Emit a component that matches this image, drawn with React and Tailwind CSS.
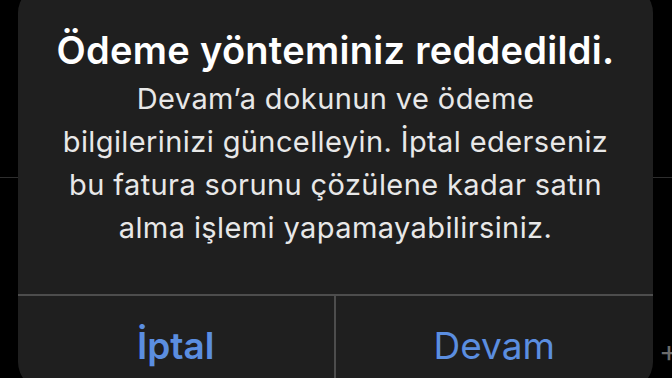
export default function App() {
  return (
    <div className="relative w-[672px] h-[378px] overflow-hidden bg-black font-['Inter','Liberation_Sans',sans-serif]">
      {/* content behind the alert */}
      <div className="pt-[177px]">
        <div className="h-px bg-[#2e2e2e]" />
      </div>
      <span className="absolute left-[659px] top-[336px] text-[30px] leading-none text-[#6b6b6b]">+</span>

      {/* alert */}
      <div className="absolute left-[18px] top-[-15px] w-[635px] h-[405px] rounded-[28px] bg-[#1f1f1f] flex flex-col">
        <div className="flex flex-col items-center px-4 pt-[42px] text-center">
          <h1 className="text-[38px] leading-[46px] font-semibold text-white tracking-[0.3px]">
            Ödeme yönteminiz reddedildi.
          </h1>
          <p className="mt-[4px] text-[29px] leading-[43px] text-[#e8e8e8] tracking-[0.4px]">
            Devam’a dokunun ve ödeme
            <br />
            bilgilerinizi güncelleyin. İptal ederseniz
            <br />
            bu fatura sorunu çözülene kadar satın
            <br />
            alma işlemi yapamayabilirsiniz.
          </p>
        </div>
        <div className="mt-auto h-[96px] border-t-2 border-[#4d4d4d] grid grid-cols-2">
          <button className="flex items-center justify-center border-r-2 border-[#4d4d4d] pt-[6px] text-[37px] font-semibold text-[#5b8ee0]">
            İptal
          </button>
          <button className="flex items-center justify-center pt-[6px] text-[37px] text-[#5b8ee0]">
            Devam
          </button>
        </div>
      </div>
    </div>
  )
}
